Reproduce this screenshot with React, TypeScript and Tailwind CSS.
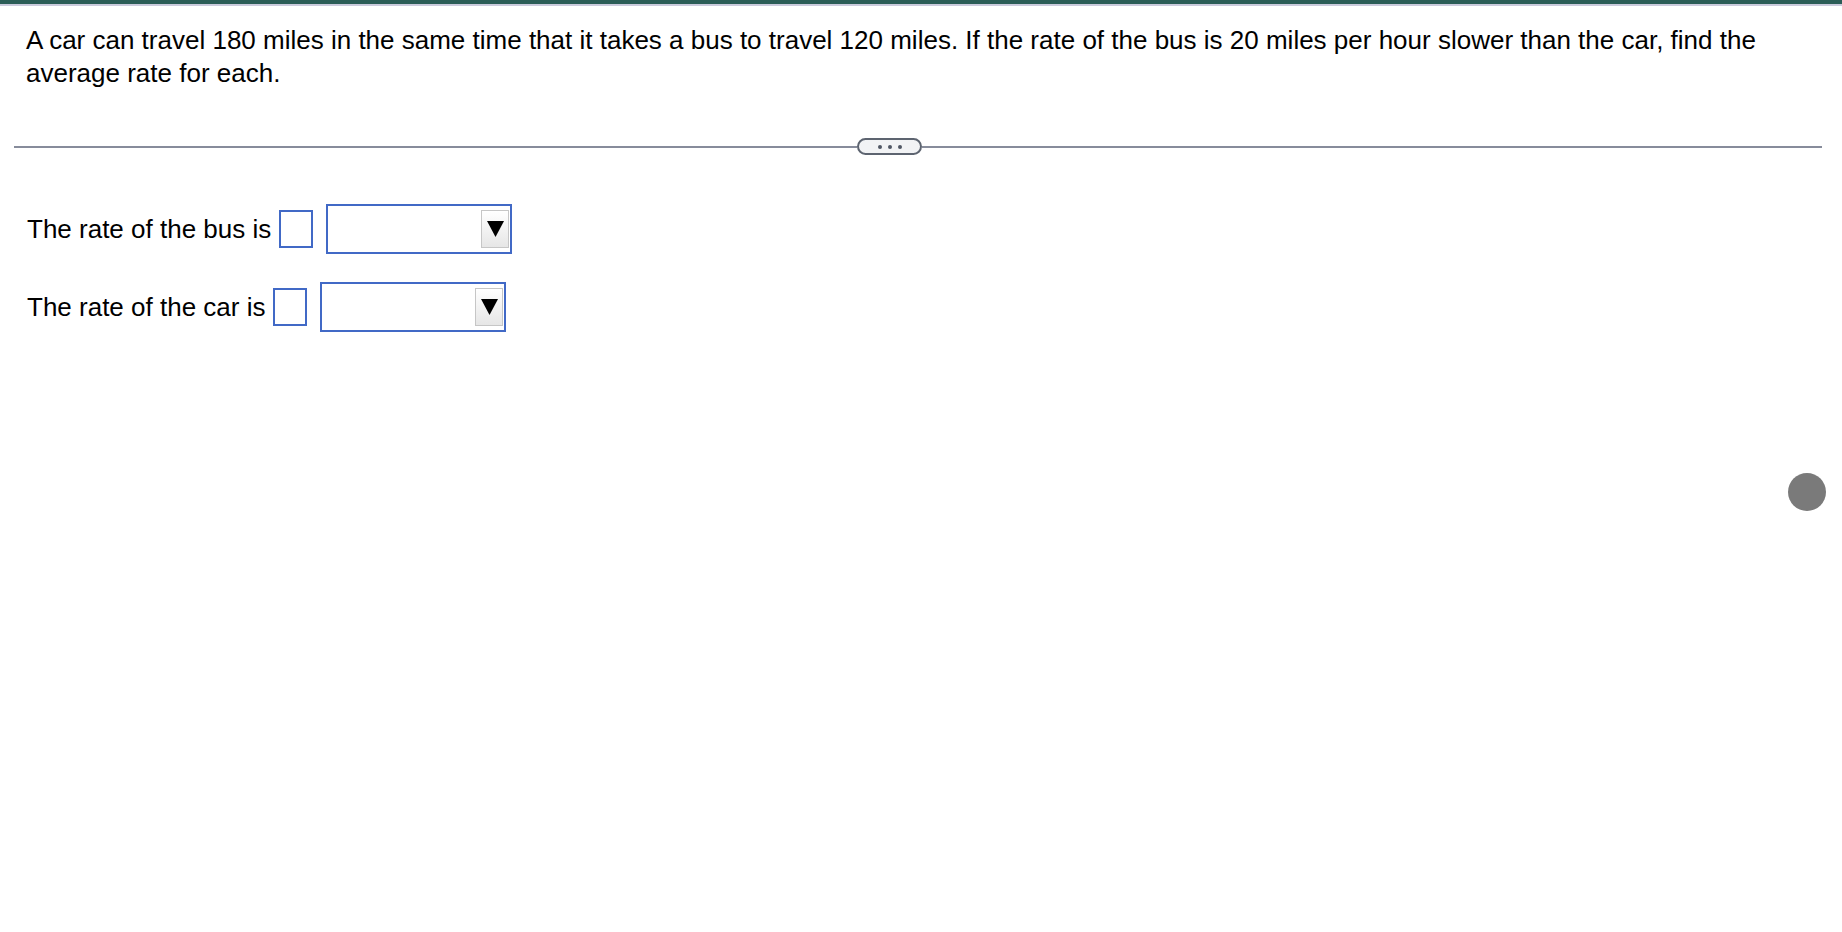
const font = { fontFamily: '"Liberation Sans", Arial, sans-serif' }

function Arrow() {
  return (
    <span className="flex h-[38px] w-[28px] items-center justify-center border border-[#c6c6c6] bg-gradient-to-b from-white to-[#e6e6e6]">
      <svg width="19" height="18" viewBox="0 0 19 18">
        <path d="M1 1 H18 L9.5 17 Z" fill="#000" />
      </svg>
    </span>
  )
}

function AnswerRow({ label }: { label: string }) {
  return (
    <div className="flex items-center">
      <span className="text-[26px] leading-none text-black">{label}</span>
      <span className="ml-[8px] h-[38px] w-[34px] border-2 border-[#4169c6] bg-white" />
      <span className="ml-[13px] flex h-[50px] w-[186px] items-center justify-end border-2 border-[#4169c6] bg-white pr-[1px]">
        <Arrow />
      </span>
    </div>
  )
}

export default function App() {
  return (
    <div className="relative min-h-screen bg-white" style={font}>
      <div className="h-[4px] bg-[#2b5d57]" />
      <div className="h-[2px] bg-[#cacadc]" />

      <p className="px-[26px] pt-[18px] text-[26px] leading-[33px] text-black">
        A car can travel 180 miles in the same time that it takes a bus to travel 120 miles. If the rate of
        the bus is 20 miles per hour slower than the car, find the average rate for each.
      </p>

      <div className="mt-[48px] flex items-center pl-[14px] pr-[20px]">
        <div className="h-[2px] w-[843px] bg-[#878c9b]" />
        <button className="flex h-[17px] w-[65px] items-center justify-center gap-[6px] rounded-full border-2 border-[#5d6470] bg-[#f2f3f5]">
          <span className="h-[4px] w-[4px] rounded-full bg-[#505764]" />
          <span className="h-[4px] w-[4px] rounded-full bg-[#505764]" />
          <span className="h-[4px] w-[4px] rounded-full bg-[#505764]" />
        </button>
        <div className="h-[2px] flex-1 bg-[#878c9b]" />
      </div>

      <div className="mt-[49px] flex flex-col gap-[28px] pl-[27px]">
        <AnswerRow label="The rate of the bus is" />
        <AnswerRow label="The rate of the car is" />
      </div>

      <div className="absolute right-[16px] top-[473px] h-[38px] w-[38px] rounded-full bg-[#7a7a7a]" />
    </div>
  )
}
